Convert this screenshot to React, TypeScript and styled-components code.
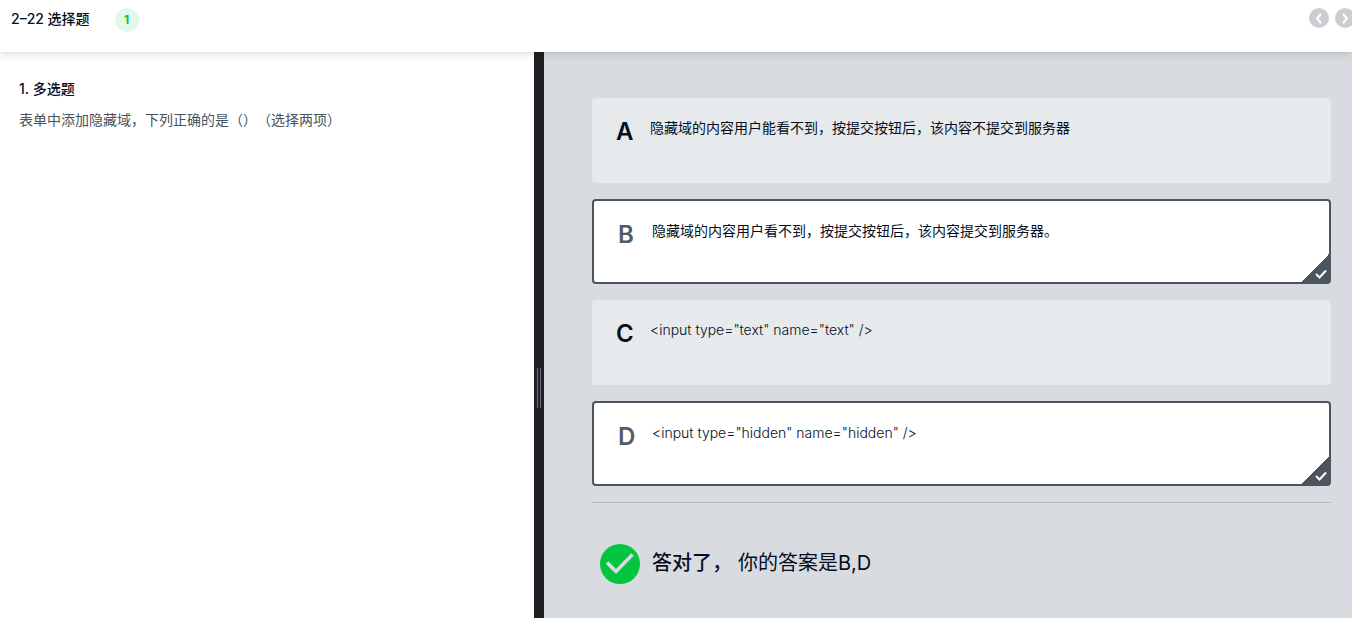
import React, { useState } from 'react';
import styled, { createGlobalStyle } from 'styled-components';

const GlobalStyle = createGlobalStyle`
  *, *::before, *::after { box-sizing: border-box; }
  body {
    margin: 0;
    background: #ffffff;
    color: #050e1c;
    font-family: Inter, "Noto Sans CJK SC", sans-serif;
    font-size: 14px;
    line-height: 20px;
    text-spacing-trim: space-all;
  }
  h1, h2, p { margin: 0; }
`;

const Page = styled.div`
  display: flex;
  flex-direction: column;
  min-height: 100vh;
  overflow: hidden;
`;

const Header = styled.header`
  position: relative;
  z-index: 1;
  display: flex;
  align-items: flex-start;
  height: 52px;
  padding: 8px 0 0 11px;
  background: #ffffff;
  box-shadow: 0 2px 8px rgba(0, 0, 0, 0.15);
`;

const Title = styled.h1`
  font-size: 14px;
  font-weight: 500;
  line-height: 22px;
`;

const CountBadge = styled.span`
  width: 24px;
  height: 24px;
  margin-left: 25px;
  border-radius: 50%;
  background: #e2f8e9;
  color: #04c53f;
  font-size: 12px;
  font-weight: 700;
  line-height: 24px;
  text-align: center;
`;

const Pager = styled.nav`
  display: flex;
  gap: 6px;
  margin: 0 -3px 0 auto;
`;

const PagerButton = styled.button`
  display: grid;
  place-items: center;
  width: 20px;
  height: 20px;
  padding: 0;
  border: 0;
  border-radius: 50%;
  background: #cccdd2;
  cursor: pointer;
`;

const Workspace = styled.main`
  flex: 1;
  display: grid;
  grid-template-columns: 534fr 10px 808fr;
`;

const QuestionPane = styled.section`
  padding: 26px 19px;
`;

const QuestionType = styled.h2`
  font-size: 14px;
  font-weight: 500;
  line-height: 22px;
`;

const QuestionText = styled.p`
  margin-top: 8px;
  color: #4a525d;
  line-height: 24px;
`;

const Splitter = styled.div`
  display: flex;
  align-items: center;
  justify-content: center;
  gap: 2px;
  padding-top: 106px;
  background: #1e1f23;
  cursor: col-resize;
`;

const Grip = styled.span`
  width: 1px;
  height: 40px;
  background: #6a6f7c;
`;

const AnswerPane = styled.section`
  padding: 46px 21px 24px 48px;
  background: #d8dbe0;
`;

const OptionList = styled.div`
  display: flex;
  flex-direction: column;
  gap: 16px;
  padding-bottom: 16px;
  border-bottom: 1px solid #b5b9be;
`;

const Option = styled.label<{ $selected: boolean }>`
  position: relative;
  display: flex;
  min-height: 85px;
  padding: 20px 24px;
  border: ${p => (p.$selected ? '2px solid #4c545e' : '0')};
  border-radius: 4px;
  background: ${p => (p.$selected ? '#ffffff' : '#e6eaed')};
  cursor: pointer;
`;

const Letter = styled.span<{ $selected: boolean }>`
  flex: 0 0 34px;
  color: ${p => (p.$selected ? '#535b66' : '#050e1c')};
  font-size: 24px;
  font-weight: 600;
  line-height: 28px;
`;

const OptionText = styled.span<{ $markup: boolean }>`
  font-weight: ${p => (p.$markup ? 300 : 400)};
  line-height: 20px;
`;

const Tick = styled.input`
  position: absolute;
  right: 0;
  bottom: 0;
  width: 28px;
  height: 28px;
  margin: 0;
  appearance: none;
  &:checked {
    background: linear-gradient(135deg, transparent 50%, #4c545e 50%);
  }
`;

const TickMark = styled.svg`
  position: absolute;
  right: 2px;
  bottom: 3px;
  pointer-events: none;
`;

const Result = styled.div`
  display: flex;
  align-items: center;
  gap: 12px;
  padding: 41px 8px 0;
`;

const ResultText = styled.p`
  padding-bottom: 2px;
  font-size: 20px;
  line-height: 28px;
`;

const Verdict = styled.strong`
  margin-right: 6px;
  font-weight: 500;
`;

const options = [
  { id: 'A', markup: false, text: '隐藏域的内容用户能看不到，按提交按钮后，该内容不提交到服务器' },
  { id: 'B', markup: false, text: '隐藏域的内容用户看不到，按提交按钮后，该内容提交到服务器。' },
  { id: 'C', markup: true, text: '<input type="text" name="text" />' },
  { id: 'D', markup: true, text: '<input type="hidden" name="hidden" />' },
];

function Chevron({ d }: { d: string }) {
  return (
    <svg width="20" height="20" viewBox="0 0 20 20" fill="none" stroke="#ffffff" strokeWidth="2" aria-hidden="true">
      <path d={d} />
    </svg>
  );
}

export default function App() {
  const [selected, setSelected] = useState<string[]>(['B', 'D']);
  const toggle = (id: string) =>
    setSelected(s => (s.includes(id) ? s.filter(x => x !== id) : [...s, id].sort()));

  return (
    <Page>
      <GlobalStyle />
      <Header>
        <Title>2–22 选择题</Title>
        <CountBadge>1</CountBadge>
        <Pager>
          <PagerButton type="button" aria-label="上一题">
            <Chevron d="M12 6 L8 10.5 L12 15" />
          </PagerButton>
          <PagerButton type="button" aria-label="下一题">
            <Chevron d="M8 6 L12 10.5 L8 15" />
          </PagerButton>
        </Pager>
      </Header>
      <Workspace>
        <QuestionPane>
          <QuestionType>1. 多选题</QuestionType>
          <QuestionText>表单中添加隐藏域，下列正确的是（）（选择两项）</QuestionText>
        </QuestionPane>
        <Splitter role="separator" aria-orientation="vertical">
          <Grip />
          <Grip />
        </Splitter>
        <AnswerPane>
          <OptionList>
            {options.map(o => {
              const on = selected.includes(o.id);
              return (
                <Option key={o.id} $selected={on}>
                  <Letter $selected={on}>{o.id}</Letter>
                  <OptionText $markup={o.markup}>{o.text}</OptionText>
                  <Tick type="checkbox" checked={on} onChange={() => toggle(o.id)} />
                  {on && (
                    <TickMark width="12" height="10" viewBox="0 0 12 10" fill="none" stroke="#ffffff" strokeWidth="2" aria-hidden="true">
                      <path d="M1 5 L4.5 8.5 L11 1.5" />
                    </TickMark>
                  )}
                </Option>
              );
            })}
          </OptionList>
          <Result>
            <svg width="40" height="40" viewBox="0 0 40 40" fill="none" aria-hidden="true">
              <circle cx="20" cy="20" r="20" fill="#04c53f" />
              <path d="M7 18.5 L16 27.5 L32.5 10.5" stroke="#d8dbe0" strokeWidth="3.6" />
            </svg>
            <ResultText>
              <Verdict>答对了，</Verdict>
              你的答案是{selected.join(',')}
            </ResultText>
          </Result>
        </AnswerPane>
      </Workspace>
    </Page>
  );
}
